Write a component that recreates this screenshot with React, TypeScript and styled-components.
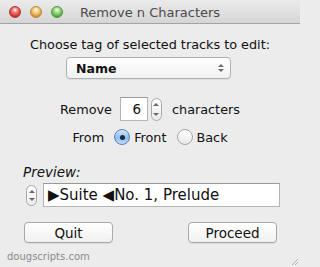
/* RemoveCharacters
======================================= */

import React from 'react';
import styled, { createGlobalStyle } from 'styled-components';

/* Style
---------------------------------- */

const GlobalStyle = createGlobalStyle`
	html, body {
		margin: 0;
		padding: 0;
		background: #ececec;
	}

	* {
		box-sizing: border-box;
	}
`;

const Window = styled.div`
	position: relative;
	width: 300px;
	height: 267px;
	display: flex;
	flex-direction: column;
	background: #ececec;
	color: #111;
	font-family: 'DejaVu Sans', 'Liberation Sans', sans-serif;
	font-size: 12px;
	overflow: hidden;
`;

const TitleBar = styled.div`
	height: 24px;
	flex-shrink: 0;
	position: relative;
	display: flex;
	align-items: center;
	justify-content: center;
	background: linear-gradient(#ebebeb, #d5d5d5);
	border-bottom: 1px solid #a3a3a3;

	.title {
		font-size: 13px;
		color: #4a4a4a;
		padding-top: 1px;
	}
`;

const Lights = styled.div`
	position: absolute;
	left: 9px;
	top: 6px;
	display: flex;
	gap: 9px;
`;

const Light = styled.span<{ $base: string; $edge: string; $glow: string }>`
	width: 12px;
	height: 12px;
	border-radius: 50%;
	border: 1px solid ${({ $edge }) => $edge};
	background: radial-gradient(circle at 50% 30%, #fff 0, ${({ $glow }) => $glow} 30%, ${({ $base }) => $base} 75%);
	box-shadow: inset 0 -1px 2px rgba(0, 0, 0, 0.15);
`;

const Body = styled.div`
	flex: 1;
	display: flex;
	flex-direction: column;
	padding: 13px 0 0 0;
`;

const Heading = styled.div`
	text-align: center;
	font-size: 12.8px;
	line-height: 16px;
`;

const Popup = styled.div`
	align-self: center;
	margin: 4px 0 0 -3px;
	width: 165px;
	height: 22px;
	display: flex;
	align-items: center;
	justify-content: space-between;
	padding: 0 6px 0 9px;
	border: 1px solid #b0b0b0;
	border-radius: 4px;
	background: linear-gradient(#ffffff, #f1f1f1);
	box-shadow: 0 1px 0 rgba(0, 0, 0, 0.06);
	font-weight: bold;
	font-size: 12.5px;
`;

const Row = styled.div<{ $top: number }>`
	display: flex;
	align-items: center;
	justify-content: center;
	margin-top: ${({ $top }) => $top}px;
	font-size: 12.8px;
`;

const NumberBox = styled.div`
	width: 28px;
	height: 24px;
	margin-left: 8px;
	display: flex;
	align-items: center;
	justify-content: flex-end;
	padding-right: 6px;
	background: #fff;
	border: 1px solid #b4b4b4;
	border-top-color: #9a9a9a;
	font-size: 13.5px;
`;

const Stepper = styled.div<{ $h: number }>`
	width: 11px;
	height: ${({ $h }) => $h}px;
	display: flex;
	flex-direction: column;
	align-items: center;
	justify-content: space-between;
	padding: 4px 0;
	border: 1px solid #a9a9a9;
	border-radius: 6px;
	background: linear-gradient(#fdfdfd, #ececec);
	flex-shrink: 0;
`;

const Radio = styled.span<{ $on?: boolean }>`
	width: 16px;
	height: 16px;
	border-radius: 50%;
	display: inline-flex;
	align-items: center;
	justify-content: center;
	margin: 0 4px 0 10px;
	border: 1px solid ${({ $on }) => ($on ? '#5a7fb8' : '#a4a4a4')};
	background: ${({ $on }) =>
		$on ? 'linear-gradient(#d3e8fd, #8ebcf0 55%, #c0ddfb)' : 'linear-gradient(#ffffff, #e9e9e9)'};

	&::after {
		content: '';
		width: 5px;
		height: 5px;
		border-radius: 50%;
		background: #1e2a3a;
		display: ${({ $on }) => ($on ? 'block' : 'none')};
	}
`;

const PreviewLabel = styled.div`
	margin: 19px 0 0 23px;
	font-style: italic;
	font-size: 13.5px;
	line-height: 16px;
`;

const PreviewRow = styled.div`
	display: flex;
	align-items: center;
	gap: 6px;
	margin: 3px 20px 0 26px;
`;

const PreviewField = styled.div`
	flex: 1;
	height: 24px;
	display: flex;
	align-items: center;
	padding-left: 4px;
	background: #fff;
	border: 1px solid #b4b4b4;
	border-top-color: #999;
	font-size: 15px;
	white-space: nowrap;
`;

const Buttons = styled.div`
	display: flex;
	justify-content: space-between;
	margin: 15px 23px 0 24px;
`;

const Button = styled.button`
	width: 89px;
	height: 21px;
	padding: 0;
	border: 1px solid #a8a8a8;
	border-radius: 4px;
	background: linear-gradient(#ffffff, #f0f0f0);
	box-shadow: 0 1px 0 rgba(0, 0, 0, 0.07);
	font-family: inherit;
	font-size: 13.5px;
	color: #111;
`;

const Footer = styled.div`
	margin: 8px 0 0 7px;
	font-size: 10px;
	line-height: 12px;
	color: #8a8a8a;
`;

const Grip = styled.svg`
	position: absolute;
	right: 1px;
	bottom: 1px;
`;

const PopupArrows = styled.span`
	display: flex;
	flex-direction: column;
	gap: 2px;
`;

/* Component
------------------------------ */

const Arrows = ({ size = 3 }: { size?: number }) => (
	<>
		<svg width={size * 2} height={size} viewBox="0 0 6 3">
			<path d="M0 3 L3 0 L6 3 Z" fill="#6a6a6a" />
		</svg>
		<svg width={size * 2} height={size} viewBox="0 0 6 3">
			<path d="M0 0 L3 3 L6 0 Z" fill="#6a6a6a" />
		</svg>
	</>
);

const App = () => {
	return (
		<>
			<GlobalStyle />
			<Window>
				<TitleBar>
					<Lights>
						<Light $base="#d8352f" $edge="#b0302b" $glow="#f27b74" />
						<Light $base="#e4a13a" $edge="#be8530" $glow="#f5cf8a" />
						<Light $base="#59b744" $edge="#489a38" $glow="#a6dd8e" />
					</Lights>
					<span className="title">Remove n Characters</span>
				</TitleBar>

				<Body>
					<Heading>Choose tag of selected tracks to edit:</Heading>

					<Popup>
						Name
						<PopupArrows>
							<Arrows />
						</PopupArrows>
					</Popup>

					<Row $top={18}>
						Remove
						<NumberBox>6</NumberBox>
						<Stepper $h={23} style={{ marginLeft: 3, marginRight: 10 }}>
							<Arrows />
						</Stepper>
						characters
					</Row>

					<Row $top={8}>
						From
						<Radio $on />
						Front
						<Radio />
						Back
					</Row>

					<PreviewLabel>Preview:</PreviewLabel>

					<PreviewRow>
						<Stepper $h={21}>
							<Arrows />
						</Stepper>
						<PreviewField>▶Suite ◀No. 1, Prelude</PreviewField>
					</PreviewRow>

					<Buttons>
						<Button>Quit</Button>
						<Button>Proceed</Button>
					</Buttons>

					<Footer>dougscripts.com</Footer>
				</Body>

				<Grip width="10" height="10" viewBox="0 0 10 10">
					<path d="M9 3 L3 9 M9 6 L6 9" stroke="#b5b5b5" strokeWidth="1" />
				</Grip>
			</Window>
		</>
	);
};

export default App;
